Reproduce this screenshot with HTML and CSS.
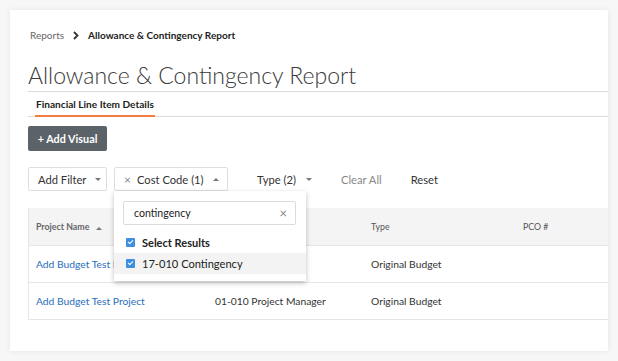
FILE: index.html
```html
<!DOCTYPE html>
<html>
<head>
<meta charset="utf-8">
<link rel="stylesheet" href="styles.css">
</head>
<body>
<div class="card">
  <div class="crumbs">
    <span class="crumb-link">Reports</span>
    <svg class="chev" width="8" height="9" viewBox="0 0 8 9"><path d="M2 1 L5.5 4.5 L2 8" fill="none" stroke="#333" stroke-width="1.8"/></svg>
    <span class="crumb-cur">Allowance &amp; Contingency Report</span>
  </div>
  <h1 class="title">Allowance &amp; Contingency Report</h1>
  <div class="tabs">
    <div class="tab active">Financial Line Item Details</div>
  </div>
  <div class="actions">
    <button class="btn-dark">+ Add Visual</button>
  </div>
  <div class="filters">
    <button class="fbtn">Add Filter <span class="caret down"></span></button>
    <button class="fbtn open"><span class="x">×</span> Cost Code (1) <span class="caret up"></span></button>
    <button class="fplain">Type (2) <span class="caret down"></span></button>
    <button class="flink muted">Clear All</button>
    <button class="flink reset">Reset</button>
    <div class="dropdown">
      <div class="search">
        <span>contingency</span>
        <span class="sx">×</span>
      </div>
      <div class="opt bold"><span class="cb"></span>Select Results</div>
      <div class="opt hl"><span class="cb"></span>17-010 Contingency</div>
    </div>
  </div>
  <div class="table">
    <div class="row head">
      <div class="cell">Project Name <span class="caret up small"></span></div>
      <div class="cell"></div>
      <div class="cell">Type</div>
      <div class="cell">PCO #</div>
    </div>
    <div class="row">
      <div class="cell link">Add Budget Test Project</div>
      <div class="cell"></div>
      <div class="cell">Original Budget</div>
      <div class="cell"></div>
    </div>
    <div class="row">
      <div class="cell link">Add Budget Test Project</div>
      <div class="cell">01-010 Project Manager</div>
      <div class="cell">Original Budget</div>
      <div class="cell"></div>
    </div>
  </div>
</div>
</body>
</html>
```

FILE: styles.css
```css
* { box-sizing: border-box; }
html, body { margin: 0; padding: 0; }
body {
  background: #f7f7f7;
  font-family: Lato, "Open Sans", sans-serif;
  color: #333;
  width: 618px;
  height: 361px;
  overflow: hidden;
}
.card {
  position: relative;
  margin: 10px 10px 0 10px;
  width: 598px;
  height: 341px;
  background: #fff;
  box-shadow: 0 0 6px rgba(0,0,0,0.08);
  padding: 19px 0 0 18px;
}
.crumbs {
  display: flex;
  align-items: center;
  font-size: 10px;
  line-height: 12px;
  height: 12px;
  padding-left: 2px;
}
.crumb-link { color: #666; }
.chev { margin: 0 8px 0 8px; }
.crumb-cur { font-weight: 700; color: #222; }
.title {
  margin: 19px 0 0 0;
  font-weight: 300;
  font-size: 23px;
  line-height: 30px;
  color: #3a3a3a;
  padding-bottom: 1px;
  border-bottom: 1px solid #dcdcdc;
}
.tabs {
  display: flex;
  padding-left: 7px;
  border-bottom: 1px solid #dcdcdc;
}
.tab {
  font-size: 10.1px;
  line-height: 13px;
  font-weight: 700;
  color: #222;
  padding: 6px 1px 4px 1px;
  border-bottom: 2px solid #f47e42;
  margin-bottom: -1px;
  white-space: nowrap;
}
.actions { padding-top: 9px; }
.btn-dark {
  display: block;
  background: #5b6368;
  color: #fff;
  border: none;
  border-radius: 2px;
  font-family: inherit;
  font-size: 10.8px;
  font-weight: 700;
  width: 79px;
  height: 25px;
  padding: 0;
}
.filters {
  position: relative;
  display: flex;
  align-items: center;
  margin-top: 16px;
  height: 24px;
}
.fbtn {
  height: 24px;
  border: 1px solid #dedede;
  background: #fff;
  border-radius: 2px;
  font-family: inherit;
  font-size: 11.2px;
  color: #333;
  padding: 0 0 0 9px;
  display: flex;
  align-items: center;
  width: 79px;
  margin-right: 7px;
}
.fbtn.open { width: 114px; }
.fbtn .x { color: #888; font-size: 12px; margin-right: 6px; }
.caret {
  display: inline-block;
  width: 0; height: 0;
  border-left: 3px solid transparent;
  border-right: 3px solid transparent;
  margin-left: 9px;
}
.caret.down { border-top: 3px solid #777; }
.caret.up { border-bottom: 3px solid #777; }
.caret.small { margin-left: 4px; }
.fplain {
  background: none; border: none; font-family: inherit;
  font-size: 11.2px; color: #333; padding: 0;
  margin-left: 22px;
  display: flex; align-items: center;
}
.fplain .caret { margin-left: 10px; }
.flink {
  background: none; border: none; font-family: inherit;
  font-size: 11.2px; color: #333; padding: 0;
  margin-left: 29px;
}
.flink.muted { color: #888; }
.flink.reset { margin-left: 29px; }
.dropdown {
  position: absolute;
  left: 86px;
  top: 24px;
  width: 192px;
  height: 90px;
  background: #fff;
  box-shadow: 0 2px 5px rgba(0,0,0,0.25);
  z-index: 5;
  padding-top: 10px;
}
.search {
  margin: 0 10px 0 9px;
  height: 24px;
  border: 1px solid #dcdcdc;
  border-radius: 2px;
  display: flex;
  align-items: center;
  justify-content: space-between;
  padding: 0 8px 0 10px;
  font-size: 10.6px;
  color: #222;
}
.sx { color: #888; font-size: 13px; }
.opt {
  display: flex;
  align-items: center;
  height: 21px;
  padding-left: 12px;
  font-size: 11.1px;
  color: #222;
}
.opt.bold { font-weight: 700; margin-top: 6px; height: 22px; font-size: 11px; }
.opt.hl { background: #f3f3f3; }
.cb {
  width: 9px; height: 9px;
  background: #3f8fe0;
  border-radius: 1px;
  margin-right: 7px;
  position: relative;
}
.cb::after {
  content: "";
  position: absolute;
  left: 2.5px; top: 1px;
  width: 2px; height: 4px;
  border: solid #fff;
  border-width: 0 1.4px 1.4px 0;
  transform: rotate(45deg);
}
.table {
  margin-top: 17px;
  border-left: 1px solid #e6e6e6;
}
.row {
  display: grid;
  grid-template-columns: 179px 156px 152px 93px;
  height: 37px;
  border-bottom: 1px solid #e6e6e6;
  align-items: center;
  font-size: 10.3px;
  color: #333;
}
.row.head {
  height: 38px;
  background: #f4f4f4;
  font-size: 8.8px;
}
.row.head .cell { font-weight: 400; color: #555; }
.row.head .cell:first-child { font-weight: 700; color: #666; }
.cell { padding-left: 7px; white-space: nowrap; overflow: hidden; }
.cell.link { color: #2a6ebb; }
```
